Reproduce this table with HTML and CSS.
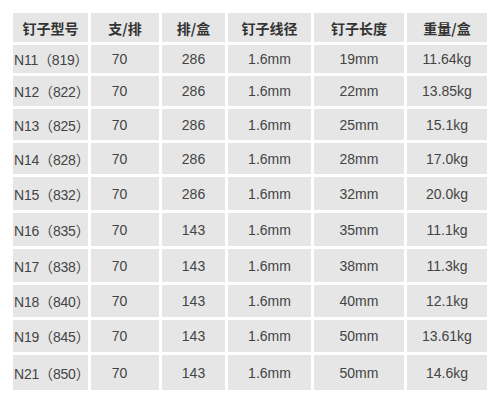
FILE: index.html
```html
<!DOCTYPE html>
<html lang="zh">
<head>
<meta charset="utf-8">
<link rel="stylesheet" href="styles.css">
</head>
<body>
<div class="page">
  <div class="table">
    <div class="cell head">钉子型号</div><div class="cell head">支/排</div><div class="cell head">排/盒</div><div class="cell head">钉子线径</div><div class="cell head">钉子长度</div><div class="cell head">重量/盒</div>

    <div class="cell name">N11（819）</div><div class="cell qty">70</div><div class="cell">286</div><div class="cell">1.6mm</div><div class="cell">19mm</div><div class="cell">11.64kg</div>
    <div class="cell name">N12（822）</div><div class="cell qty">70</div><div class="cell">286</div><div class="cell">1.6mm</div><div class="cell">22mm</div><div class="cell">13.85kg</div>
    <div class="cell name">N13（825）</div><div class="cell qty">70</div><div class="cell">286</div><div class="cell">1.6mm</div><div class="cell">25mm</div><div class="cell">15.1kg</div>
    <div class="cell name">N14（828）</div><div class="cell qty">70</div><div class="cell">286</div><div class="cell">1.6mm</div><div class="cell">28mm</div><div class="cell">17.0kg</div>
    <div class="cell name">N15（832）</div><div class="cell qty">70</div><div class="cell">286</div><div class="cell">1.6mm</div><div class="cell">32mm</div><div class="cell">20.0kg</div>
    <div class="cell name">N16（835）</div><div class="cell qty">70</div><div class="cell">143</div><div class="cell">1.6mm</div><div class="cell">35mm</div><div class="cell">11.1kg</div>
    <div class="cell name">N17（838）</div><div class="cell qty">70</div><div class="cell">143</div><div class="cell">1.6mm</div><div class="cell">38mm</div><div class="cell">11.3kg</div>
    <div class="cell name">N18（840）</div><div class="cell qty">70</div><div class="cell">143</div><div class="cell">1.6mm</div><div class="cell">40mm</div><div class="cell">12.1kg</div>
    <div class="cell name">N19（845）</div><div class="cell qty">70</div><div class="cell">143</div><div class="cell">1.6mm</div><div class="cell">50mm</div><div class="cell">13.61kg</div>
    <div class="cell name">N21（850）</div><div class="cell qty">70</div><div class="cell">143</div><div class="cell">1.6mm</div><div class="cell">50mm</div><div class="cell">14.6kg</div>
  </div>
</div>
</body>
</html>
```

FILE: styles.css
```css
html, body {
  margin: 0;
  padding: 0;
  background: #ffffff;
}

.page {
  padding: 13px 0 0 13px;
}

.table {
  display: grid;
  grid-template-columns: 75px 68px 63px 83px 90px 80px;
  grid-template-rows: 29px 28px 30px 31px 31px 33px 33px 33px 32px 32px 35px;
  gap: 3px;
  width: 474px;
  font-family: "Liberation Sans", Arial, "Noto Sans CJK SC", sans-serif;
  font-size: 14px;
  color: #444444;
}

.cell {
  background: #e6e6e6;
  display: flex;
  align-items: center;
  justify-content: center;
  white-space: nowrap;
}

.head {
  font-family: "Noto Sans CJK SC", sans-serif;
  font-weight: 700;
  color: #333333;
  font-size: 14px;
}

.name {
  justify-content: flex-start;
  padding-left: 1px;
  letter-spacing: -0.2px;
}

.qty {
  padding-right: 11px;
}
```
